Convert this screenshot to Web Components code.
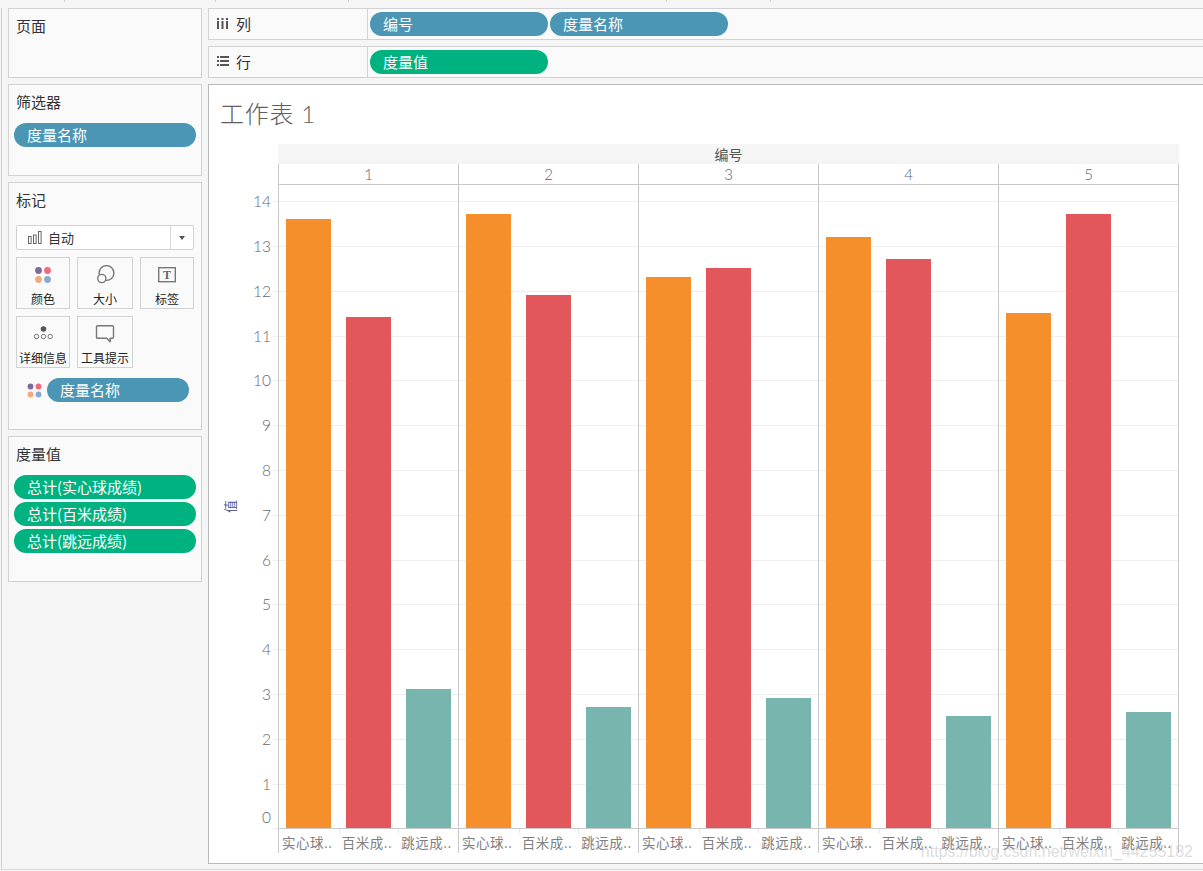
<!DOCTYPE html>
<html lang="zh">
<head>
<meta charset="utf-8">
<title>工作表 1</title>
<style>
  html, body { margin: 0; height: 100%; background: #f5f5f5; overflow: hidden; }
  body { font-family: "Noto Sans CJK SC", "Liberation Sans", sans-serif; }
</style>
</head>
<body>
<tab-workspace>
  <div slot="side">
    <side-card title="页面" height="70"></side-card>
    <side-card title="筛选器" height="92">
      <field-pill>度量名称</field-pill>
    </side-card>
    <side-card title="标记" height="248">
      <marks-shelf></marks-shelf>
    </side-card>
    <side-card title="度量值" height="146">
      <field-pill color="green">总计(实心球成绩)</field-pill>
      <field-pill color="green">总计(百米成绩)</field-pill>
      <field-pill color="green">总计(跳远成绩)</field-pill>
    </side-card>
  </div>
  <div slot="main">
    <top-shelf label="列" icon="cols">
      <field-pill size="178">编号</field-pill>
      <field-pill size="178">度量名称</field-pill>
    </top-shelf>
    <top-shelf label="行" icon="rows">
      <field-pill color="green" size="178">度量值</field-pill>
    </top-shelf>
    <sheet-view title="工作表 1"></sheet-view>
  </div>
</tab-workspace>

<script>
class TabWorkspace extends HTMLElement {
    constructor() {
        super();
        const root = this.attachShadow({ mode: 'open' });
        root.innerHTML = `<style>
            :host { display: block; width: 1203px; height: 871px; box-sizing: border-box; position: relative; }
            .ticks { display: flex; height: 2px; }
            .ticks i { width: 1px; background: #d4d4d4; }
            .frame { display: grid; grid-template-columns: 194px 995px; column-gap: 6px; align-items: start; box-sizing: border-box; height: 862px; margin: 6px 0 0 1px; padding-left: 6px; border-left: 1px solid #cfcfcf; border-bottom: 1px solid #dcdcdc; }
            ::slotted([slot=side]), ::slotted([slot=main]) { display: flex; flex-direction: column; gap: 6px; }
            .mark { position: absolute; right: 10px; top: 843px; color: rgba(175, 175, 175, .45); font: 16px "Liberation Sans", sans-serif; pointer-events: none; }
        </style>
        <div class="ticks">
            <i style="margin-left:64px"></i><i style="margin-left:150px"></i><i style="margin-left:132px"></i><i style="margin-left:317px"></i><i style="margin-left:103px"></i>
        </div>
        <div class="frame">
            <slot name="side"></slot>
            <slot name="main"></slot>
        </div>
        <div class="mark">https://blog.csdn.net/weixin_44255182</div>`;
    }
}

class SideCard extends HTMLElement {
    constructor() {
        super();
        const root = this.attachShadow({ mode: 'open' });
        root.innerHTML = `<style>
            :host { display: block; box-sizing: border-box; background: #fafafa; border: 1px solid #d2d2d2; padding: 6px 5px 0; }
            h3 { margin: 0 0 10px 2px; font: 400 15px/22px "Noto Sans CJK SC", sans-serif; color: #333; }
            .list { display: flex; flex-direction: column; gap: 3px; }
        </style>
        <h3></h3>
        <div class="list"><slot></slot></div>`;
    }

    connectedCallback() {
        this.shadowRoot.querySelector('h3').textContent = this.getAttribute('title');
        this.removeAttribute('title');
        this.style.height = this.getAttribute('height') + 'px';
    }
}

class FieldPill extends HTMLElement {
    constructor() {
        super();
        const root = this.attachShadow({ mode: 'open' });
        root.innerHTML = `<style>
            :host { display: block; box-sizing: border-box; height: 24px; border-radius: 12px; padding-left: 13px; background: #4b96b5; color: #fff; font: 400 15px/24px "Noto Sans CJK SC", sans-serif; white-space: nowrap; }
            :host([color=green]) { background: #00b27f; }
        </style><slot></slot>`;
    }

    connectedCallback() {
        if (this.hasAttribute('size')) {
            this.style.width = this.getAttribute('size') + 'px';
        }
    }
}

class MarksShelf extends HTMLElement {
    constructor() {
        super();
        const root = this.attachShadow({ mode: 'open' });
        root.innerHTML = `<style>
            :host { display: block; padding-left: 2px; }
            .select { box-sizing: border-box; width: 178px; height: 25px; margin-top: 4px; display: flex; align-items: center; background: #fff; border: 1px solid #d2d2d2; border-radius: 2px; font-size: 13px; color: #333; }
            .select svg { margin: 0 6px 0 11px; }
            .select span { flex: 1; }
            .select b { width: 22px; height: 100%; border-left: 1px solid #d8d8d8; display: flex; align-items: center; justify-content: center; }
            .select b::after { content: ""; border: 3.5px solid transparent; border-top: 4px solid #555; border-bottom: 0; }
            .grid { display: grid; grid-template-columns: 54px 56px 54px; gap: 7px; margin-top: 7px; }
            .pill { display: flex; align-items: center; margin: 10px 0 0 11px; }
            .pill svg { margin-right: 5px; }
            .pill field-pill { width: 142px; }
        </style>
        <div class="select">
            <svg width="14" height="13" viewBox="0 0 14 13" fill="none" stroke="#666" stroke-width="1"><rect x=".5" y="5.5" width="2.6" height="7"/><rect x="5.5" y="4" width="2.6" height="8.5"/><rect x="10.5" y=".5" width="2.6" height="12"/></svg>
            <span>自动</span><b></b>
        </div>
        <div class="grid">
            <mark-button label="颜色">
                <svg width="20" height="20" viewBox="0 0 20 20"><circle cx="5.5" cy="5.5" r="3.4" fill="#7f6a9b"/><circle cx="14.5" cy="5.5" r="3.4" fill="#f0697f"/><circle cx="5.5" cy="14.5" r="3.4" fill="#f4a87d"/><circle cx="14.5" cy="14.5" r="3.4" fill="#8aa9d0"/></svg>
            </mark-button>
            <mark-button label="大小">
                <svg width="20" height="20" viewBox="0 0 20 20" stroke="#777" stroke-width="1.4" fill="none"><circle cx="11.5" cy="8" r="7.4"/><circle cx="6.8" cy="13.5" r="4.1" fill="#fafafa"/></svg>
            </mark-button>
            <mark-button label="标签">
                <svg width="20" height="20" viewBox="0 0 20 20"><rect x="1.7" y="2.7" width="16.6" height="14" fill="none" stroke="#777" stroke-width="1.4"/><text x="10" y="14" text-anchor="middle" font-family="Liberation Serif" font-weight="700" font-size="12" fill="#666">T</text></svg>
            </mark-button>
            <mark-button label="详细信息">
                <svg width="20" height="20" viewBox="0 0 20 20" stroke="#777" fill="none"><circle cx="10.5" cy="5" r="2.8" fill="#555" stroke="none"/><circle cx="3.5" cy="12.5" r="2.2"/><circle cx="10.5" cy="12.5" r="2.2"/><circle cx="17.2" cy="12.5" r="2.2"/></svg>
            </mark-button>
            <mark-button label="工具提示">
                <svg width="20" height="20" viewBox="0 0 20 20" stroke="#777" stroke-width="1.4" fill="none"><path d="M2.5 1.700h15a1 1 0 0 1 1 1v10.500a1 1 0 0 1-1 1h-2.300v3.600l-3.400-3.600h-9.300a1 1 0 0 1-1-1v-10.500a1 1 0 0 1 1-1z" stroke-linejoin="round"/></svg>
            </mark-button>
        </div>
        <div class="pill">
            <svg width="15" height="15" viewBox="0 0 15 15"><circle cx="3.500" cy="3.500" r="2.900" fill="#7f6a9b"/><circle cx="11.500" cy="3.500" r="2.900" fill="#f0697f"/><circle cx="3.500" cy="11.500" r="2.900" fill="#f4a87d"/><circle cx="11.500" cy="11.500" r="2.900" fill="#8aa9d0"/></svg>
            <field-pill>度量名称</field-pill>
        </div>`;
    }
}

class MarkButton extends HTMLElement {
    constructor() {
        super();
        const root = this.attachShadow({ mode: 'open' });
        root.innerHTML = `<style>
            :host { display: flex; flex-direction: column; align-items: center; box-sizing: border-box; height: 52px; padding-top: 7px; background: #fafafa; border: 1px solid #d2d2d2; }
            .icon { height: 26px; }
            .text { font: 400 12px/16px "Noto Sans CJK SC", sans-serif; color: #222; white-space: nowrap; }
        </style>
        <div class="icon"><slot></slot></div>
        <div class="text"></div>`;
    }

    connectedCallback() {
        this.shadowRoot.querySelector('.text').textContent = this.getAttribute('label');
    }
}

class TopShelf extends HTMLElement {
    constructor() {
        super();
        const root = this.attachShadow({ mode: 'open' });
        root.innerHTML = `<style>
            :host { display: flex; box-sizing: border-box; height: 32px; background: #fafafa; border-top: 1px solid #d2d2d2; border-bottom: 1px solid #d2d2d2; border-left: 1px solid #d2d2d2; }
            .label { box-sizing: border-box; width: 159px; display: flex; align-items: center; padding: 0 0 2px 8px; gap: 7px; border-right: 1px solid #d2d2d2; font: 400 15px "Noto Sans CJK SC", sans-serif; color: #333; }
            .pills { display: flex; gap: 2px; padding: 3px 0 0 2px; }
        </style>
        <div class="label"><span class="icon"></span><span class="name"></span></div>
        <div class="pills"><slot></slot></div>`;
    }

    connectedCallback() {
        const icons = {
            cols: '<svg width="12" height="11" viewBox="0 0 12 11" fill="#555" style="display:block"><rect x="0" y="0" width="2" height="2"/><rect x="0" y="3" width="2" height="8"/><rect x="4.500" y="0" width="2" height="2"/><rect x="4.500" y="3" width="2" height="8"/><rect x="9" y="0" width="2" height="2"/><rect x="9" y="3" width="2" height="8"/></svg>',
            rows: '<svg width="12" height="10" viewBox="0 0 12 10" fill="#555" style="display:block"><rect x="0" y="0" width="2" height="2"/><rect x="3" y="0" width="9" height="2"/><rect x="0" y="4" width="2" height="2"/><rect x="3" y="4" width="9" height="2"/><rect x="0" y="8" width="2" height="2"/><rect x="3" y="8" width="9" height="2"/></svg>'
        };
        this.shadowRoot.querySelector('.icon').innerHTML = icons[this.getAttribute('icon')];
        this.shadowRoot.querySelector('.name').textContent = this.getAttribute('label');
    }
}

class SheetView extends HTMLElement {
    constructor() {
        super();
        const root = this.attachShadow({ mode: 'open' });
        root.innerHTML = `<style>
            :host { display: block; box-sizing: border-box; height: 780px; background: #fff; border: 1px solid #b9b9b9; border-right: 0; }
            h1 { margin: 0; box-sizing: border-box; height: 59px; padding: 11px 0 0 11px; font: 300 24px/36px Lato, "Noto Sans CJK SC", sans-serif; color: #5e5e5e; letter-spacing: .7px; }
            .band { margin-left: 69px; width: 901px; height: 20px; background: #f5f5f5; text-align: center; font: 400 14px/20px "Noto Sans CJK SC", sans-serif; color: #555; }
            .chart { display: flex; }
            .axis { width: 69px; display: flex; padding-top: 21px; box-sizing: border-box; }
            .axis-title { width: 42px; height: 643px; display: flex; align-items: center; justify-content: center; }
            .axis-title span { transform: rotate(-90deg); font: 400 13px "Noto Sans CJK SC", sans-serif; color: #5b6090; }
            .panes { display: flex; width: 901px; }
        </style>
        <h1></h1>
        <div class="band">编号</div>
        <div class="chart">
            <div class="axis">
                <div class="axis-title"><span>值</span></div>
                <value-axis max="14"></value-axis>
            </div>
            <div class="panes">
                <chart-pane col="1" values="13.6,11.4,3.1"></chart-pane>
                <chart-pane col="2" values="13.7,11.9,2.7"></chart-pane>
                <chart-pane col="3" values="12.3,12.5,2.9"></chart-pane>
                <chart-pane col="4" values="13.2,12.7,2.5"></chart-pane>
                <chart-pane col="5" values="11.5,13.7,2.6" last></chart-pane>
            </div>
        </div>`;
    }

    connectedCallback() {
        this.shadowRoot.querySelector('h1').textContent = this.getAttribute('title');
        this.removeAttribute('title');
    }
}

// one unit on the value axis, in pixels
const UNIT = 44.8;

class ValueAxis extends HTMLElement {
    constructor() {
        super();
        const root = this.attachShadow({ mode: 'open' });
        root.innerHTML = `<style>
            :host { display: block; width: 27px; padding-top: 16.2px; box-sizing: border-box; height: 643px; }
            .tick { display: flex; height: ${UNIT}px; }
            .tick span { flex: 1; height: 0; text-align: right; font: 300 15.5px/0 Lato, sans-serif; color: #666670; margin-right: 2px; }
            .tick.zero span { margin-top: -11px; }
            .tick i { width: 5px; height: 0; border-top: 1px solid #efefef; }
        </style><div id="ticks"></div>`;
    }

    connectedCallback() {
        const max = Number(this.getAttribute('max'));
        let html = '';
        for (let v = max; v >= 0; v--) {
            html += `<div class="tick ${v === 0 ? 'zero' : ''}"><span>${v}</span><i></i></div>`;
        }
        this.shadowRoot.querySelector('#ticks').innerHTML = html;
    }
}

class ChartPane extends HTMLElement {
    constructor() {
        super();
        const root = this.attachShadow({ mode: 'open' });
        root.innerHTML = `<style>
            :host { display: flex; flex-direction: column; flex: none; width: 180px; box-sizing: border-box; height: 689px; border-left: 1px solid #c9c9c9; }
            :host([last]) { border-right: 1px solid #c9c9c9; width: 181px; }
            .head { box-sizing: border-box; height: 21px; border-bottom: 1px solid #c9c9c9; text-align: center; font: 300 15px/20px Lato, sans-serif; color: #62627a; }
            .plot { display: grid; grid-template-rows: 643px; height: 643px; }
            .lines, .bars { grid-area: 1 / 1; }
            .lines { padding-top: 16.2px; overflow: hidden; }
            .lines i { display: block; height: ${UNIT}px; box-sizing: border-box; border-top: 1px solid #efefef; }
            .bars { display: flex; align-items: flex-end; gap: 15px; padding-left: 7px; }
            .bars i { display: block; width: 45px; }
            .cats { display: flex; height: 25px; box-sizing: border-box; border-top: 1px solid #c9c9c9; }
            .cats span { width: 60px; box-sizing: border-box; padding: 4px 0 0 3px; font: 400 13.5px/18px "Noto Sans CJK SC", sans-serif; letter-spacing: .5px; color: #808080; white-space: nowrap; overflow: hidden; background: linear-gradient(#e6e6e6, #e6e6e6) 0 0 / 1px 4px no-repeat; }
            .cats span:first-child { background: none; }
        </style>
        <div class="head"></div>
        <div class="plot">
            <div class="lines"></div>
            <div class="bars"></div>
        </div>
        <div class="cats"><span>实心球..</span><span>百米成..</span><span>跳远成..</span></div>`;
    }

    connectedCallback() {
        const colors = ['#f58f2c', '#e2575b', '#78b5af'];
        const values = this.getAttribute('values').split(',').map(Number);
        this.shadowRoot.querySelector('.head').textContent = this.getAttribute('col');
        this.shadowRoot.querySelector('.lines').innerHTML = '<i></i>'.repeat(14);
        this.shadowRoot.querySelector('.bars').innerHTML = values
            .map((v, i) => `<i style="height:${v * UNIT}px;background:${colors[i]}"></i>`)
            .join('');
    }
}

customElements.define('tab-workspace', TabWorkspace);
customElements.define('side-card', SideCard);
customElements.define('field-pill', FieldPill);
customElements.define('marks-shelf', MarksShelf);
customElements.define('mark-button', MarkButton);
customElements.define('top-shelf', TopShelf);
customElements.define('sheet-view', SheetView);
customElements.define('value-axis', ValueAxis);
customElements.define('chart-pane', ChartPane);
</script>
</body>
</html>
